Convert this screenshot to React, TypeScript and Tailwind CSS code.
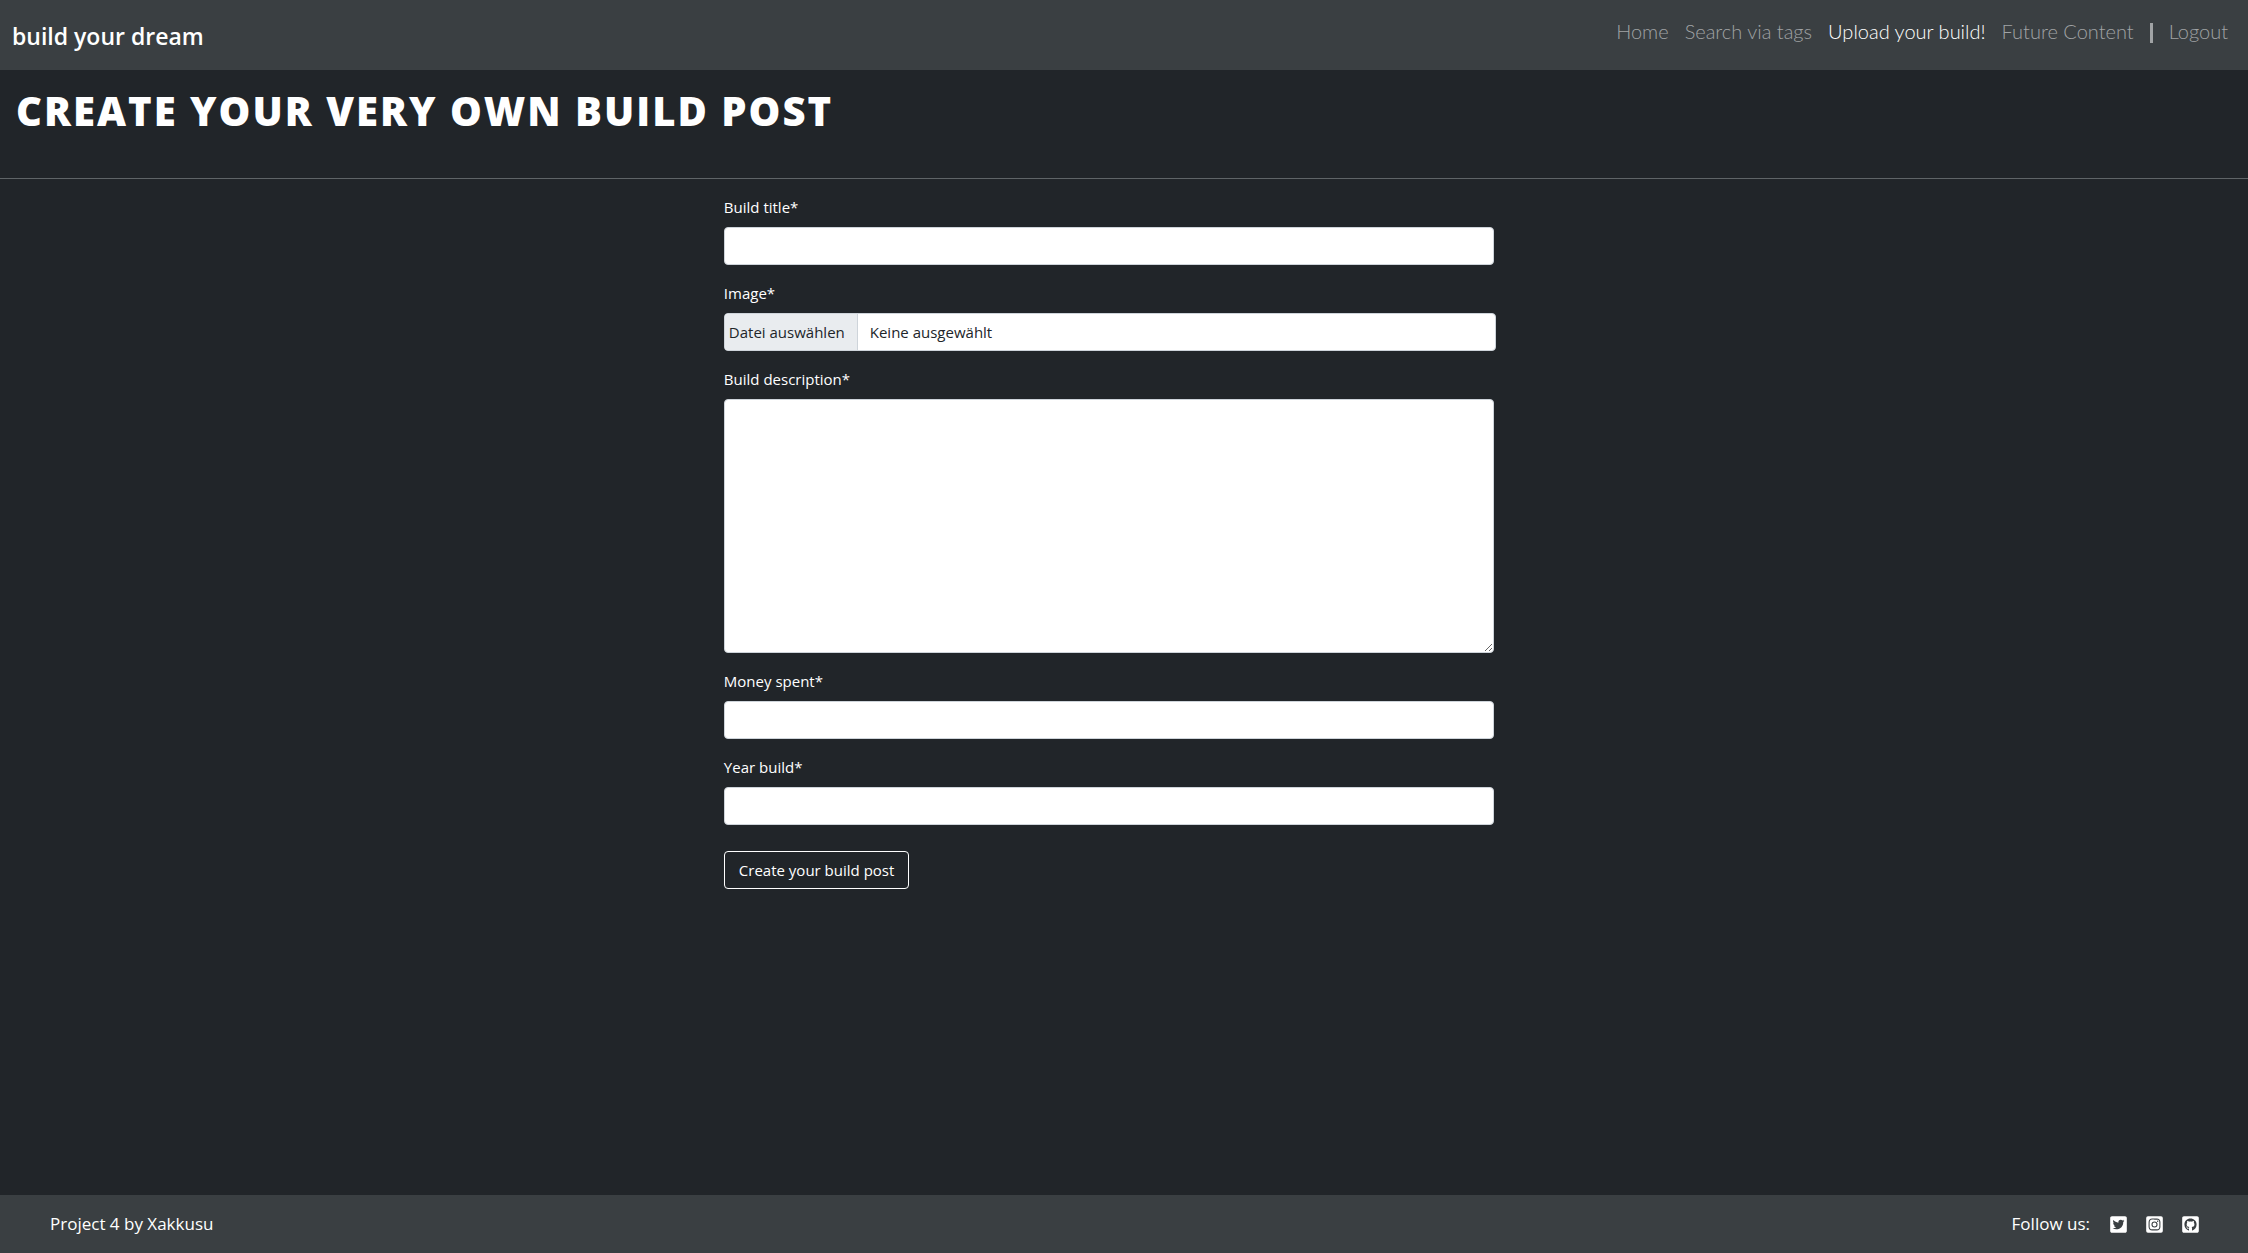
import React from "react";
import { FaGithubSquare, FaInstagramSquare, FaTwitterSquare } from "react-icons/fa";

const navLinks = [
  { label: "Home" },
  { label: "Search via tags" },
  { label: "Upload your build!", active: true },
  { label: "Future Content" },
];

const socials = [
  { label: "Twitter", Icon: FaTwitterSquare },
  { label: "Instagram", Icon: FaInstagramSquare },
  { label: "GitHub", Icon: FaGithubSquare },
];

const control =
  "block w-full rounded border border-[#ced4da] bg-white px-3 text-[15px] leading-6 text-[#212529] outline-none focus:border-[#86b7fe]";

function Field({ id, label, children }: { id: string; label: string; children: React.ReactNode }) {
  return (
    <div className="mb-4">
      <label htmlFor={id} className="mb-2 block">
        {label}
      </label>
      {children}
    </div>
  );
}

export default function App() {
  return (
    <div className="flex min-h-screen flex-col bg-[#212529] font-['Open_Sans',sans-serif] text-[15px] leading-6 text-white">
      <header className="flex items-start justify-between bg-[#3a3f42] pr-5 pb-4 pl-3">
        <a href="#" className="pt-[18px] text-[23px] leading-9 font-semibold">
          build your dream
        </a>
        <nav className="flex items-center gap-4 pt-4 font-['Lato',sans-serif] text-[20px] leading-[30px] font-light text-[#a0a3a5]">
          {navLinks.map(({ label, active }) => (
            <a key={label} href="#" className={active ? "text-white" : "hover:text-white"}>
              {label}
            </a>
          ))}
          <span className="mt-[3px] h-5 w-[3px] bg-[#a0a3a5]" />
          <a href="#" className="hover:text-white">
            Logout
          </a>
        </nav>
      </header>

      <main className="grow">
        <h1 className="border-b border-[#5f6467] px-4 pt-[17px] pb-[43px] text-[40px] leading-[48px] font-extrabold tracking-[2px] uppercase">
          Create your very own build post
        </h1>

        <form className="ml-[32.2%] w-[34.25%] pt-4" onSubmit={(e) => e.preventDefault()}>
          <Field id="title" label="Build title*">
            <input id="title" type="text" className={`${control} h-[38px]`} />
          </Field>
          <Field id="image" label="Image*">
            <label
              htmlFor="image"
              className="flex h-[38px] w-[calc(100%+2px)] cursor-pointer items-stretch overflow-hidden rounded border border-[#ced4da] bg-white leading-9 text-[#212529]"
            >
              <span className="border-r border-[#ced4da] bg-[#e9ecef] pr-3 pl-1">Datei auswählen</span>
              <span className="pl-3">Keine ausgewählt</span>
              <input id="image" type="file" className="sr-only" />
            </label>
          </Field>
          <Field id="description" label="Build description*">
            <textarea id="description" rows={10} className={`${control} resize-y py-1.5`} />
          </Field>
          <Field id="money" label="Money spent*">
            <input id="money" type="text" className={`${control} h-[38px]`} />
          </Field>
          <Field id="year" label="Year build*">
            <input id="year" type="text" className={`${control} h-[38px]`} />
          </Field>
          <button
            type="submit"
            className="mt-[10px] mb-6 h-[38px] rounded border border-white px-[14px] hover:bg-white hover:text-[#212529]"
          >
            Create your build post
          </button>
        </form>
      </main>

      <footer className="flex h-[58px] items-center justify-between bg-[#3a3f42] px-12 text-[17px]">
        <p className="pl-0.5">Project 4 by Xakkusu</p>
        <div className="flex items-center gap-[17px]">
          <span className="pr-0.5">Follow us:</span>
          {socials.map(({ label, Icon }) => (
            <a key={label} href="#" aria-label={label}>
              <Icon size={19} />
            </a>
          ))}
        </div>
      </footer>
    </div>
  );
}
